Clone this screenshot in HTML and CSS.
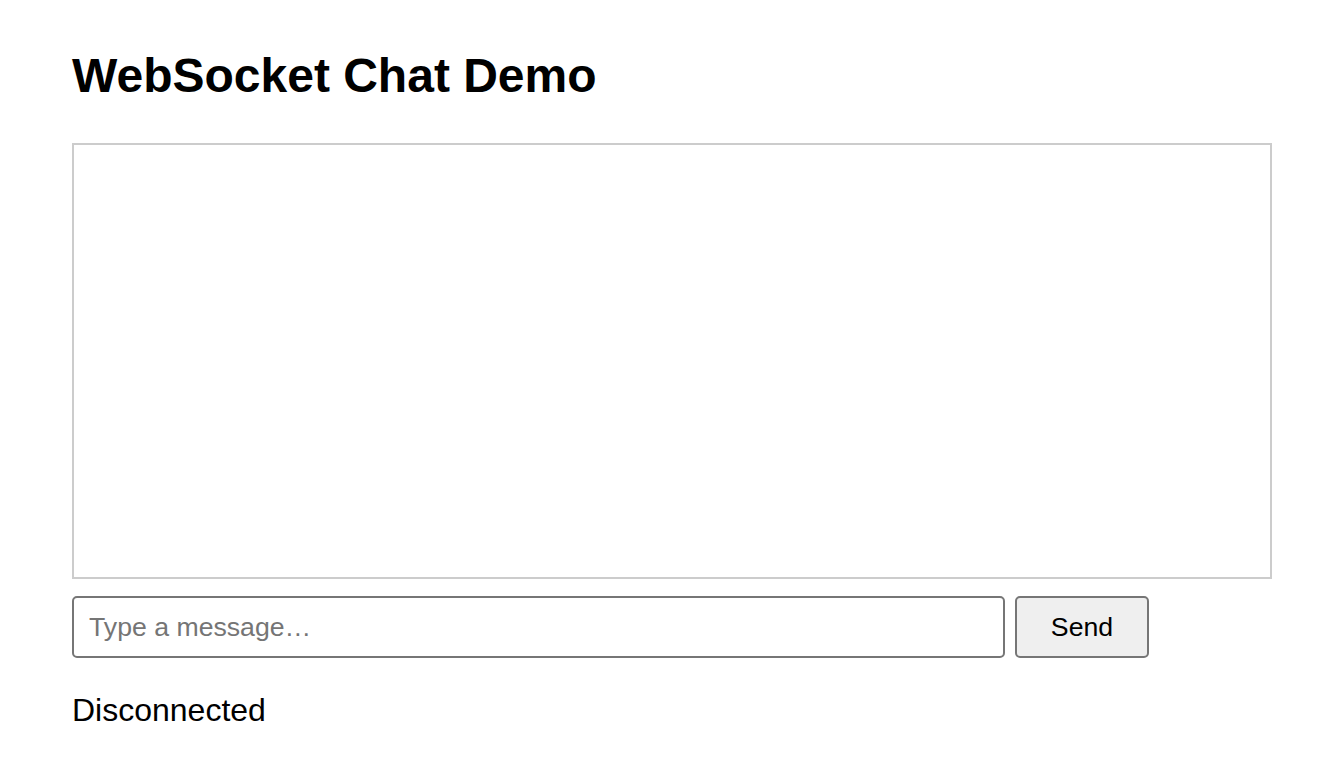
FILE: index.html
```html
<!DOCTYPE html>
<html lang="en">
<head>
<meta charset="UTF-8">
<meta name="viewport" content="width=device-width, initial-scale=1.0">
<title>WebSocket Chat Demo</title>
<link rel="stylesheet" href="styles.css">
</head>
<body>
<h1>WebSocket Chat Demo</h1>
<div id="messages" class="messages"></div>
<form class="chat-form" id="chat-form">
<input type="text" id="message-input" class="message-input" placeholder="Type a message…" autocomplete="off">
<button type="submit" class="send-button">Send</button>
</form>
<div id="status" class="status">Disconnected</div>
</body>
</html>
```

FILE: styles.css
```css
body {
    font-family: "Liberation Sans", Arial, sans-serif;
    margin: 0;
    padding: 0 72px;
    color: #000;
    background: #fff;
}
h1 {
    font-size: 48px;
    font-weight: bold;
    margin: 48px 0 40px;
}
.messages {
    width: 1200px;
    height: 436px;
    box-sizing: border-box;
    border: 2px solid #ccc;
    overflow-y: auto;
}
.chat-form {
    display: flex;
    gap: 10px;
    margin-top: 17px;
}
.message-input {
    width: 933px;
    height: 62px;
    box-sizing: border-box;
    border: 2px solid #767676;
    border-radius: 5px;
    padding: 0 15px;
    font-family: inherit;
    font-size: 26.67px;
    margin: 0;
}
.message-input::placeholder {
    color: #757575;
}
.send-button {
    width: 134px;
    height: 62px;
    box-sizing: border-box;
    border: 2px solid #767676;
    border-radius: 5px;
    background-color: #efefef;
    font-family: inherit;
    font-size: 26.67px;
    color: #000;
    margin: 0;
}
.status {
    margin-top: 34px;
    font-size: 32px;
}
```
